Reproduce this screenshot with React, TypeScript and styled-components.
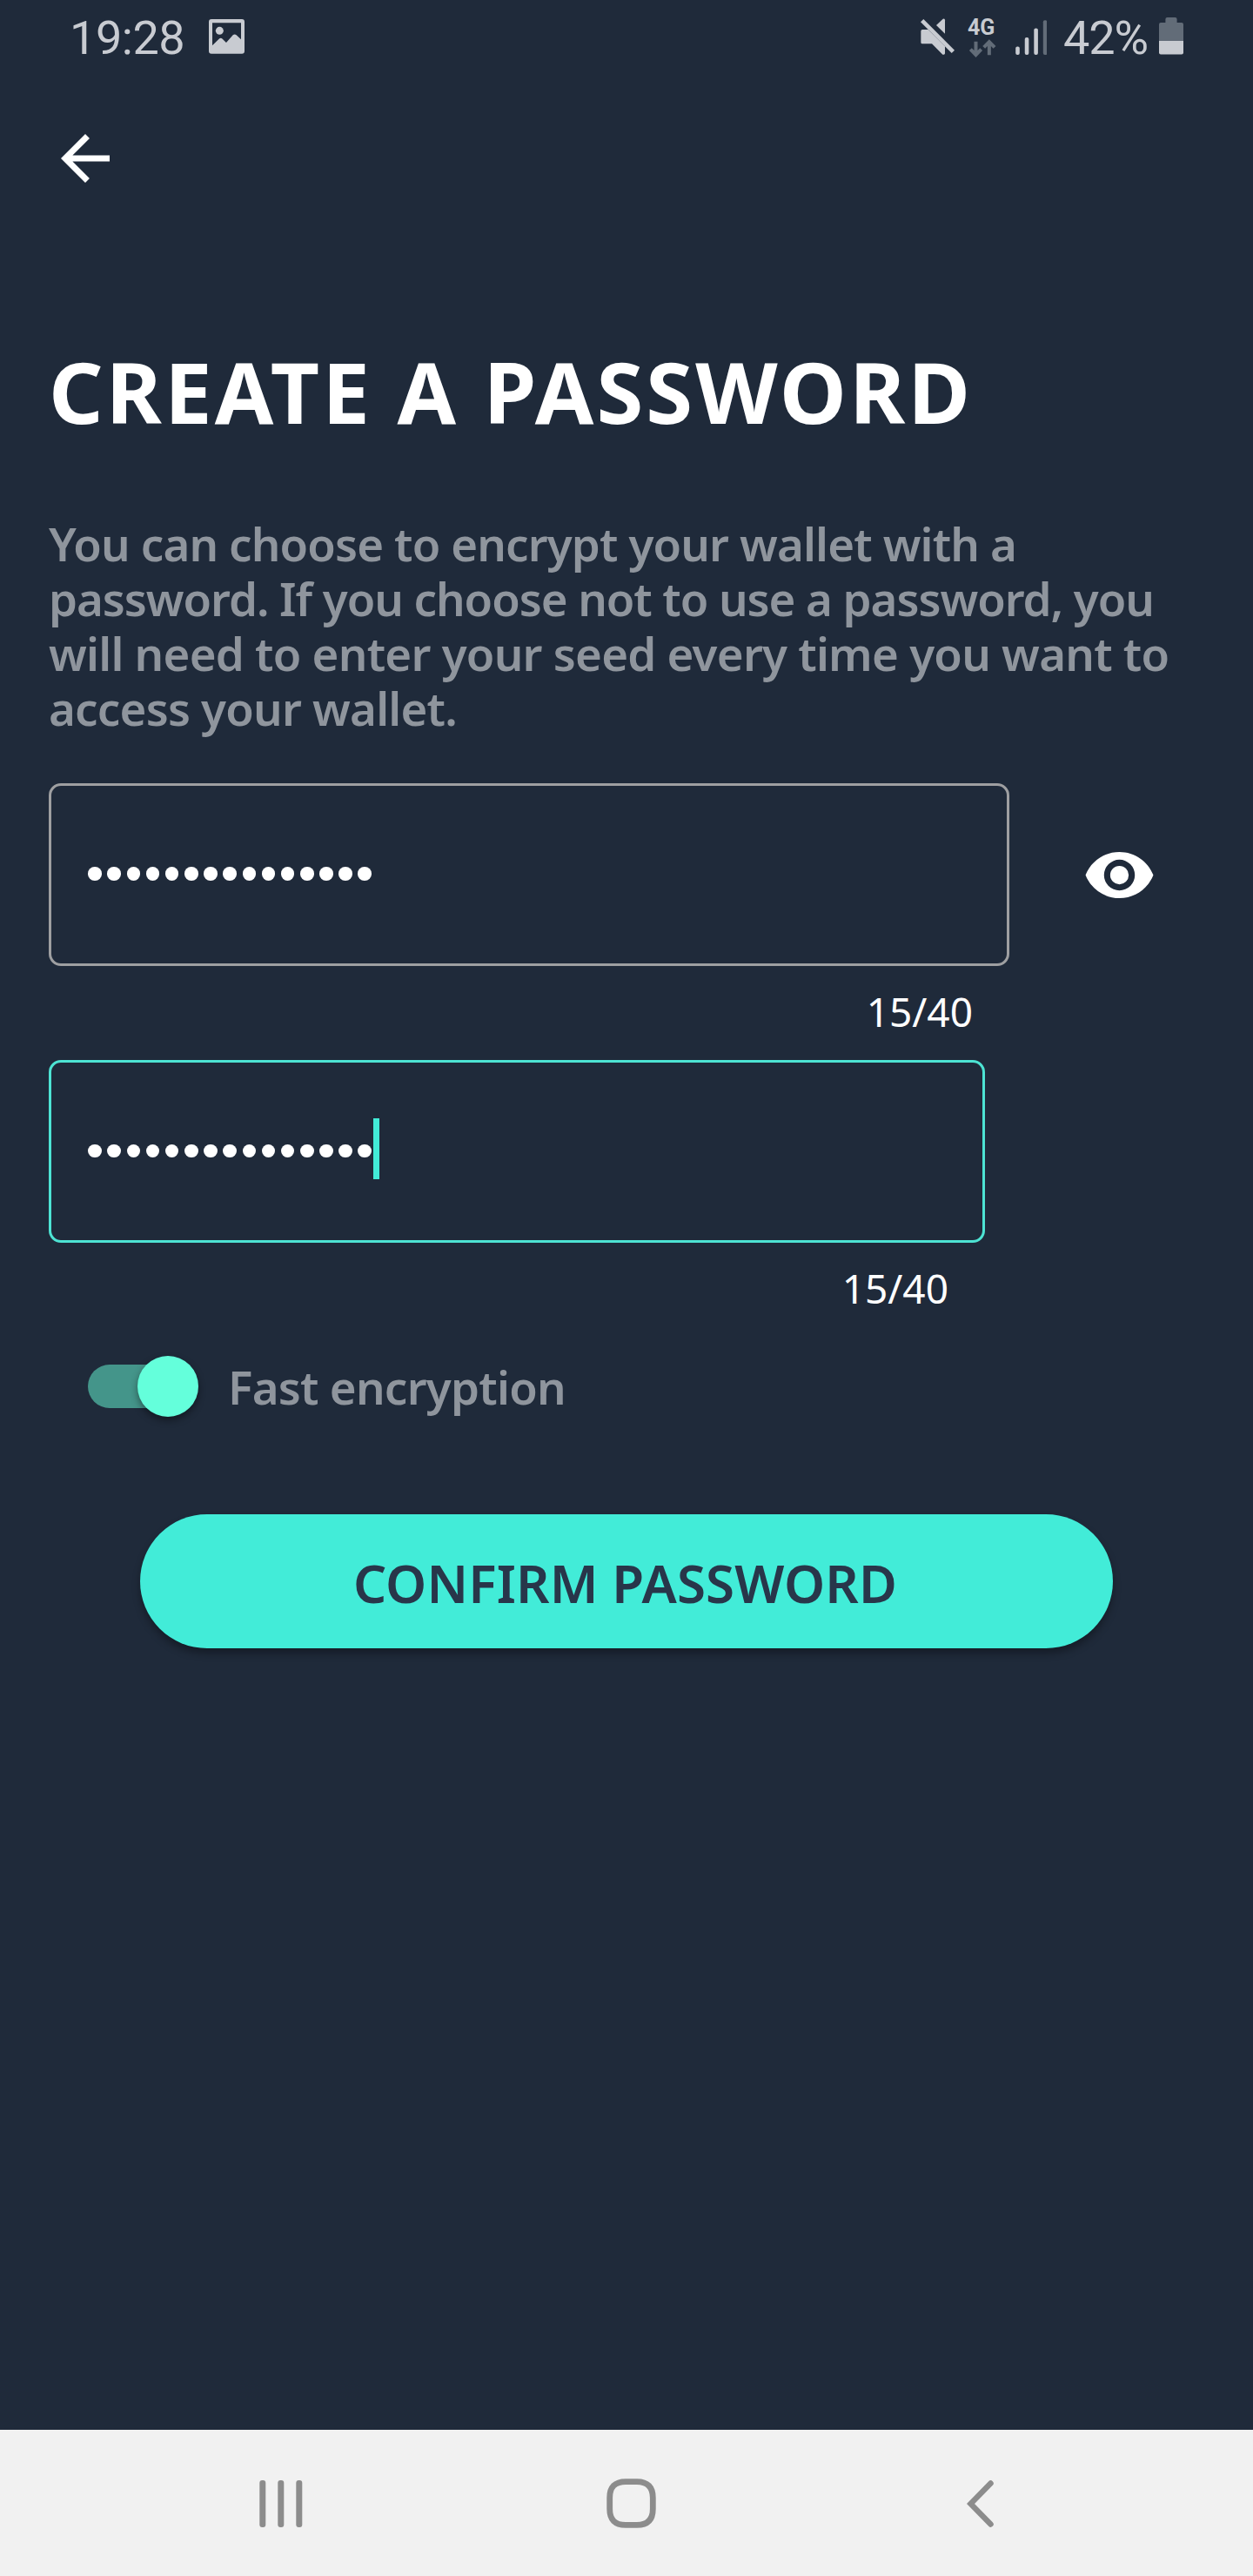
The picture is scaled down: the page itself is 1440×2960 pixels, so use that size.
import React from "react";
import styled, { createGlobalStyle } from "styled-components";

const GlobalStyle = createGlobalStyle`
  *, *::before, *::after { box-sizing: border-box; }
  body { margin: 0; background: #1f2a3a; }
`;

const SANS = `"Noto Sans", "Open Sans", sans-serif`;
const ROBOTO = `Roboto, "Noto Sans", sans-serif`;
const LIGHT = "#c8cbd1";
const DIM = "#626c78";

const Screen = styled.div`
  display: flex;
  flex-direction: column;
  width: 1440px;
  height: 2960px;
  background: #1f2a3a;
  font-family: ${SANS};
  overflow: hidden;
`;

const StatusBar = styled.header`
  display: flex;
  flex: none;
  align-items: center;
  justify-content: space-between;
  height: 87px;
  padding: 0 80px;
  color: ${LIGHT};
  font-family: ${ROBOTO};
`;

const StatusGroup = styled.div`
  display: flex;
  align-items: center;
`;

const StatusText = styled.span<{ $width: number; $tracking: number }>`
  width: ${(p) => p.$width}px;
  font-size: 54px;
  line-height: 64px;
  letter-spacing: ${(p) => p.$tracking}px;
  white-space: nowrap;
`;

const StatusIcon = styled.svg<{ $after?: number; $lift?: number }>`
  display: block;
  flex: none;
  margin-right: ${(p) => p.$after ?? 0}px;
  margin-bottom: ${(p) => p.$lift ?? 0}px;
`;

const Network = styled.div`
  display: flex;
  flex-direction: column;
  width: 33px;
  margin-right: 21.5px;
  font-size: 25px;
  font-weight: 700;
  line-height: 24px;
`;

const AppBar = styled.nav`
  display: flex;
  flex: none;
  align-items: center;
  height: 190px;
  padding-left: 56px;
`;

const IconButton = styled.button`
  display: flex;
  padding: 0;
  border: 0;
  background: none;
  color: #fff;
`;

const Content = styled.main`
  display: flex;
  flex: 1;
  flex-direction: column;
  align-items: flex-start;
  padding: 113px 56px 0;
`;

const Title = styled.h1`
  margin: 0;
  color: #fff;
  font-size: 97.6px;
  font-weight: 700;
  line-height: 119px;
  letter-spacing: 3.17px;
  white-space: nowrap;
`;

const Description = styled.p`
  margin: 84px 0 55px;
  color: #8f959d;
  font-size: 52.8px;
  font-weight: 600;
  line-height: 63px;
`;

const Line = styled.span<{ $tracking: number }>`
  display: block;
  letter-spacing: ${(p) => p.$tracking}px;
  white-space: nowrap;
`;

const FieldRow = styled.div`
  display: flex;
  align-items: center;
  gap: 83.5px;
`;

const Field = styled.div<{ $width: number; $focused?: boolean }>`
  display: flex;
  align-items: center;
  width: ${(p) => p.$width}px;
  height: 210px;
  padding-left: 42.3px;
  border: 3.5px solid ${(p) => (p.$focused ? "#4de3d3" : "#9e9fa1")};
  border-radius: 14px;
`;

const Dots = styled.div<{ $lift: number }>`
  display: flex;
  gap: 6.66px;
  margin-bottom: ${(p) => p.$lift}px;
`;

const Dot = styled.i`
  width: 15.5px;
  height: 15.5px;
  border-radius: 50%;
  background: #fff;
`;

const Caret = styled.i`
  width: 7px;
  height: 70px;
  margin: 0 0 6px 2.5px;
  background: #42ecd8;
`;

const Counter = styled.div<{ $width: number; $gap: number }>`
  width: ${(p) => p.$width}px;
  margin: 22px 0 ${(p) => p.$gap}px;
  padding-right: 42px;
  color: #fff;
  font-size: 46px;
  line-height: 60px;
  text-align: right;
`;

const SwitchRow = styled.label`
  display: flex;
  align-items: center;
  gap: 34px;
  height: 70px;
  margin-left: 45px;
`;

const Track = styled.span`
  display: flex;
  align-items: center;
  justify-content: flex-end;
  width: 127px;
  height: 50px;
  border-radius: 25px;
  background: linear-gradient(90deg, #44958a 0 100px, transparent 100px);
`;

const Thumb = styled.span`
  flex: none;
  width: 70px;
  height: 70px;
  border-radius: 50%;
  background: #64ffdb;
  box-shadow: 0 4px 9px rgba(0, 0, 0, 0.42);
`;

const SwitchText = styled.span`
  padding-top: 1px;
  color: #8f959d;
  font-size: 52.8px;
  font-weight: 600;
  line-height: 63px;
  letter-spacing: -0.74px;
`;

const Confirm = styled.button`
  width: 1118px;
  height: 154px;
  margin: 111.5px 0 0 105px;
  padding: 5px 3px 0 0;
  border: 0;
  border-radius: 77px;
  background: #42ecd8;
  box-shadow: 0 6px 10px rgba(0, 0, 0, 0.32);
  color: #28364a;
  font-family: ${SANS};
  font-size: 60px;
  font-weight: 600;
  letter-spacing: 0.15px;
`;

const NavBar = styled.footer`
  display: flex;
  flex: none;
  align-items: center;
  justify-content: space-between;
  height: 168px;
  padding: 1px 298px 0 297.5px;
  background: #f1f1f1;
`;

const HomeIcon = styled.svg`
  margin-right: 7.5px;
`;

const PasswordDots = ({ lift }: { lift: number }) => (
  <Dots $lift={lift}>
    {Array.from({ length: 15 }, (_, i) => (
      <Dot key={i} />
    ))}
  </Dots>
);

export default function App() {
  return (
    <Screen>
      <GlobalStyle />
      <StatusBar>
        <StatusGroup>
          <StatusText $width={160} $tracking={-0.46}>19:28</StatusText>
          <StatusIcon $lift={3} width="41" height="39.7" viewBox="600 66 123 119" fill={LIGHT}>
            <path
              fillRule="evenodd"
              d="M609 66H714Q723 66 723 75V176Q723 185 714 185H609Q600 185 600 176V75Q600 66 609 66ZM612 79V157L635 134Q641 129 647 134L660 147L683 121Q689 116 695 121L711 136V79Z"
            />
            <circle cx="637" cy="106" r="13.5" />
          </StatusIcon>
        </StatusGroup>
        <StatusGroup>
          <StatusIcon $after={14.5} $lift={4} width="40.7" height="44" viewBox="20 28 122 132" fill={LIGHT}>
            <path d="M33 34L140 141L130 151L23 44Z" />
            <path d="M24 75Q24 70 29 70H49L107 128V152Q107 156 103 156H99L62 119H29Q24 119 24 114Z" />
            <path d="M77 55L100 33Q107 30 107 38V84Z" />
          </StatusIcon>
          <Network>
            4G
            <StatusIcon width="32.7" height="22.7" viewBox="188 100 98 68" fill="none" stroke={DIM} strokeWidth="12">
              <path d="M216.500 111V156M198 138L216.500 157L235 138" />
              <path d="M262.500 158V113M244 131L262.500 112L281 131" />
            </StatusIcon>
          </Network>
          <StatusIcon $after={19} $lift={1} width="36.5" height="40" viewBox="0 0 36.5 40" fill={LIGHT}>
            <rect x="0.200" y="30.500" width="4.600" height="9.500" rx="2" />
            <rect x="10.750" y="20" width="4.600" height="20" rx="2" />
            <rect x="21.300" y="9.500" width="4.600" height="30.500" rx="2" />
            <rect x="31.800" y="0.300" width="4.600" height="39.700" rx="2" fill={DIM} />
          </StatusIcon>
          <StatusText $width={110} $tracking={-1.1}>42%</StatusText>
          <StatusIcon $lift={4} width="28" height="42.5" viewBox="0 0 28 42.5" fill={DIM}>
            <path d="M9.500 0H18.500Q20.600 0 20.600 2V6H26Q28 6 28 8V27H0V8Q0 6 2 6H7.400V2Q7.400 0 9.500 0Z" />
            <path fill={LIGHT} d="M0 27H28V40.500Q28 42.500 26 42.500H2Q0 42.500 0 40.500Z" />
          </StatusIcon>
        </StatusGroup>
      </StatusBar>

      <AppBar>
        <IconButton aria-label="Back">
          <svg width="84" height="84" viewBox="0 0 24 24" fill="currentColor">
            <path d="M20 11H7.830L13.420 5.410L12 4L4 12L12 20L13.410 18.590L7.830 13H20V11Z" />
          </svg>
        </IconButton>
      </AppBar>

      <Content>
        <Title>CREATE A PASSWORD</Title>
        <Description>
          <Line $tracking={-0.86}>You can choose to encrypt your wallet with a</Line>
          <Line $tracking={-1.05}>password. If you choose not to use a password, you</Line>
          <Line $tracking={-0.75}>will need to enter your seed every time you want to</Line>
          <Line $tracking={-0.78}>access your wallet.</Line>
        </Description>

        <FieldRow>
          <Field $width={1104}>
            <PasswordDots lift={2} />
          </Field>
          <IconButton aria-label="Show password">
            <svg width="85" height="85" viewBox="0 0 24 24" fill="currentColor">
              <path d="M12 4.500C7 4.500 2.730 7.610 1 12C2.730 16.390 7 19.500 12 19.500S21.270 16.390 23 12C21.270 7.610 17 4.500 12 4.500ZM12 17A5 5 0 1 1 12 7A5 5 0 0 1 12 17ZM12 9A3 3 0 1 0 12 15A3 3 0 0 0 12 9Z" />
            </svg>
          </IconButton>
        </FieldRow>
        <Counter $width={1104} $gap={26}>15/40</Counter>

        <Field $width={1076} $focused>
          <PasswordDots lift={1} />
          <Caret />
        </Field>
        <Counter $width={1076} $gap={48}>15/40</Counter>

        <SwitchRow>
          <Track>
            <Thumb />
          </Track>
          <SwitchText>Fast encryption</SwitchText>
        </SwitchRow>

        <Confirm>CONFIRM PASSWORD</Confirm>
      </Content>

      <NavBar>
        <svg width="50" height="54" viewBox="0 0 50 54" fill="#8c8c8c">
          <rect x="0.300" y="0" width="7" height="54" rx="3" />
          <rect x="21.300" y="0" width="7" height="54" rx="3" />
          <rect x="42.300" y="0" width="7" height="54" rx="3" />
        </svg>
        <HomeIcon width="57" height="57" viewBox="0 0 57 57" fill="none" stroke="#8c8c8c" strokeWidth="6.8">
          <path d="M22 3.600H35Q53.300 3.600 53.300 22V35Q53.300 53.400 35 53.400H22Q3.700 53.400 3.700 35V22Q3.700 3.600 22 3.600Z" />
        </HomeIcon>
        <svg width="31" height="54" viewBox="0 0 31 54" fill="none" stroke="#8c8c8c" strokeWidth="6.5" strokeLinecap="round">
          <path d="M27.500 3.500L4.500 27L27.500 50.500" />
        </svg>
      </NavBar>
    </Screen>
  );
}
